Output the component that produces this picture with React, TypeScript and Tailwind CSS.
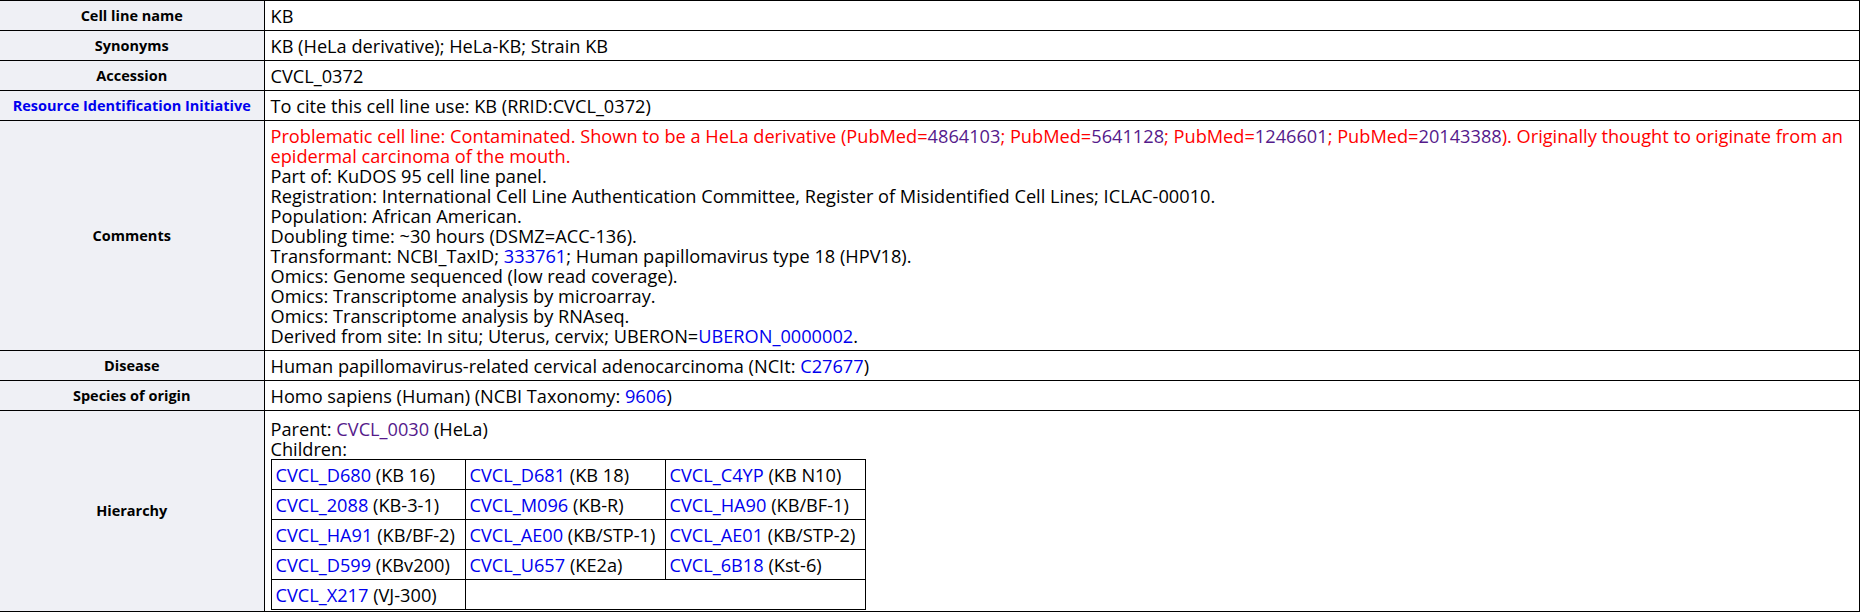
import React from "react";

const HEAD =
  "w-[264px] bg-[#eff0f5] border-b border-r border-black text-center align-middle font-['Open_Sans',sans-serif] font-bold text-[14.5px] leading-[18px] text-black px-1";
const VAL =
  "border-b border-r border-black align-top px-[6px] text-[18.2px] leading-[20px] text-black";

const blue = "text-[#0000ee]";
const purple = "text-[#551a8b]";

function Row({ head, children, pad }: { head: React.ReactNode; children: React.ReactNode; pad?: string }) {
  return (
    <tr>
      <td className={HEAD}>{head}</td>
      <td className={VAL + " " + (pad ?? "pt-[5px] pb-[4px]")}>{children}</td>
    </tr>
  );
}

const children: [string, string][] = [
  ["CVCL_D680", "KB 16"],
  ["CVCL_D681", "KB 18"],
  ["CVCL_C4YP", "KB N10"],
  ["CVCL_2088", "KB-3-1"],
  ["CVCL_M096", "KB-R"],
  ["CVCL_HA90", "KB/BF-1"],
  ["CVCL_HA91", "KB/BF-2"],
  ["CVCL_AE00", "KB/STP-1"],
  ["CVCL_AE01", "KB/STP-2"],
  ["CVCL_D599", "KBv200"],
  ["CVCL_U657", "KE2a"],
  ["CVCL_6B18", "Kst-6"],
];

function Child({ id, name }: { id: string; name: string }) {
  return (
    <td className="border border-black px-[4px] pt-[5px] pb-[4px] whitespace-nowrap overflow-hidden">
      <span className={blue}>{id}</span> ({name})
    </td>
  );
}

export default function App() {
  const rows: [string, string][][] = [];
  for (let i = 0; i < children.length; i += 3) rows.push(children.slice(i, i + 3));
  return (
    <div className="w-[1861px] h-[616px] bg-white font-['Open_Sans',sans-serif] overflow-hidden">
      <table className="w-[1860px] border-collapse border-t border-r border-black">
        <tbody>
          <Row head="Cell line name">KB</Row>
          <Row head="Synonyms">KB (HeLa derivative); HeLa-KB; Strain KB</Row>
          <Row head="Accession">CVCL_0372</Row>
          <Row head={<span className="text-[#0000ee]">Resource Identification Initiative</span>}>
            To cite this cell line use: KB (RRID:CVCL_0372)
          </Row>
          <Row head="Comments">
            <span className="text-[#ff0000]">
              Problematic cell line: Contaminated. Shown to be a HeLa derivative (PubMed=
              <span className={purple}>4864103</span>; PubMed=<span className={purple}>5641128</span>; PubMed=
              <span className={purple}>1246601</span>; PubMed=<span className={purple}>20143388</span>). Originally
              thought to originate from an
              <br />
              epidermal carcinoma of the mouth.
            </span>
            <br />
            Part of: KuDOS 95 cell line panel.
            <br />
            Registration: International Cell Line Authentication Committee, Register of Misidentified Cell Lines;
            ICLAC-00010.
            <br />
            Population: African American.
            <br />
            Doubling time: ~30 hours (DSMZ=ACC-136).
            <br />
            Transformant: NCBI_TaxID; <span className={blue}>333761</span>; Human papillomavirus type 18 (HPV18).
            <br />
            Omics: Genome sequenced (low read coverage).
            <br />
            Omics: Transcriptome analysis by microarray.
            <br />
            Omics: Transcriptome analysis by RNAseq.
            <br />
            Derived from site: In situ; Uterus, cervix; UBERON=<span className={blue}>UBERON_0000002</span>.
          </Row>
          <Row head="Disease">
            Human papillomavirus-related cervical adenocarcinoma (NCIt: <span className={blue}>C27677</span>)
          </Row>
          <Row head="Species of origin">
            Homo sapiens (Human) (NCBI Taxonomy: <span className={blue}>9606</span>)
          </Row>
          <Row head="Hierarchy" pad="pt-[8px] pb-[1px]">
            Parent: <span className={purple}>CVCL_0030</span> (HeLa)
            <br />
            Children:
            <table className="border-collapse table-fixed w-[594px] border border-black">
              <colgroup>
                <col className="w-[194px]" />
                <col className="w-[200px]" />
                <col className="w-[200px]" />
              </colgroup>
              <tbody>
                {rows.map((r, i) => (
                  <tr key={i}>
                    {r.map(([id, name]) => (
                      <Child key={id} id={id} name={name} />
                    ))}
                  </tr>
                ))}
                <tr>
                  <Child id="CVCL_X217" name="VJ-300" />
                  <td colSpan={2} className="border border-black"></td>
                </tr>
              </tbody>
            </table>
          </Row>
        </tbody>
      </table>
    </div>
  );
}
